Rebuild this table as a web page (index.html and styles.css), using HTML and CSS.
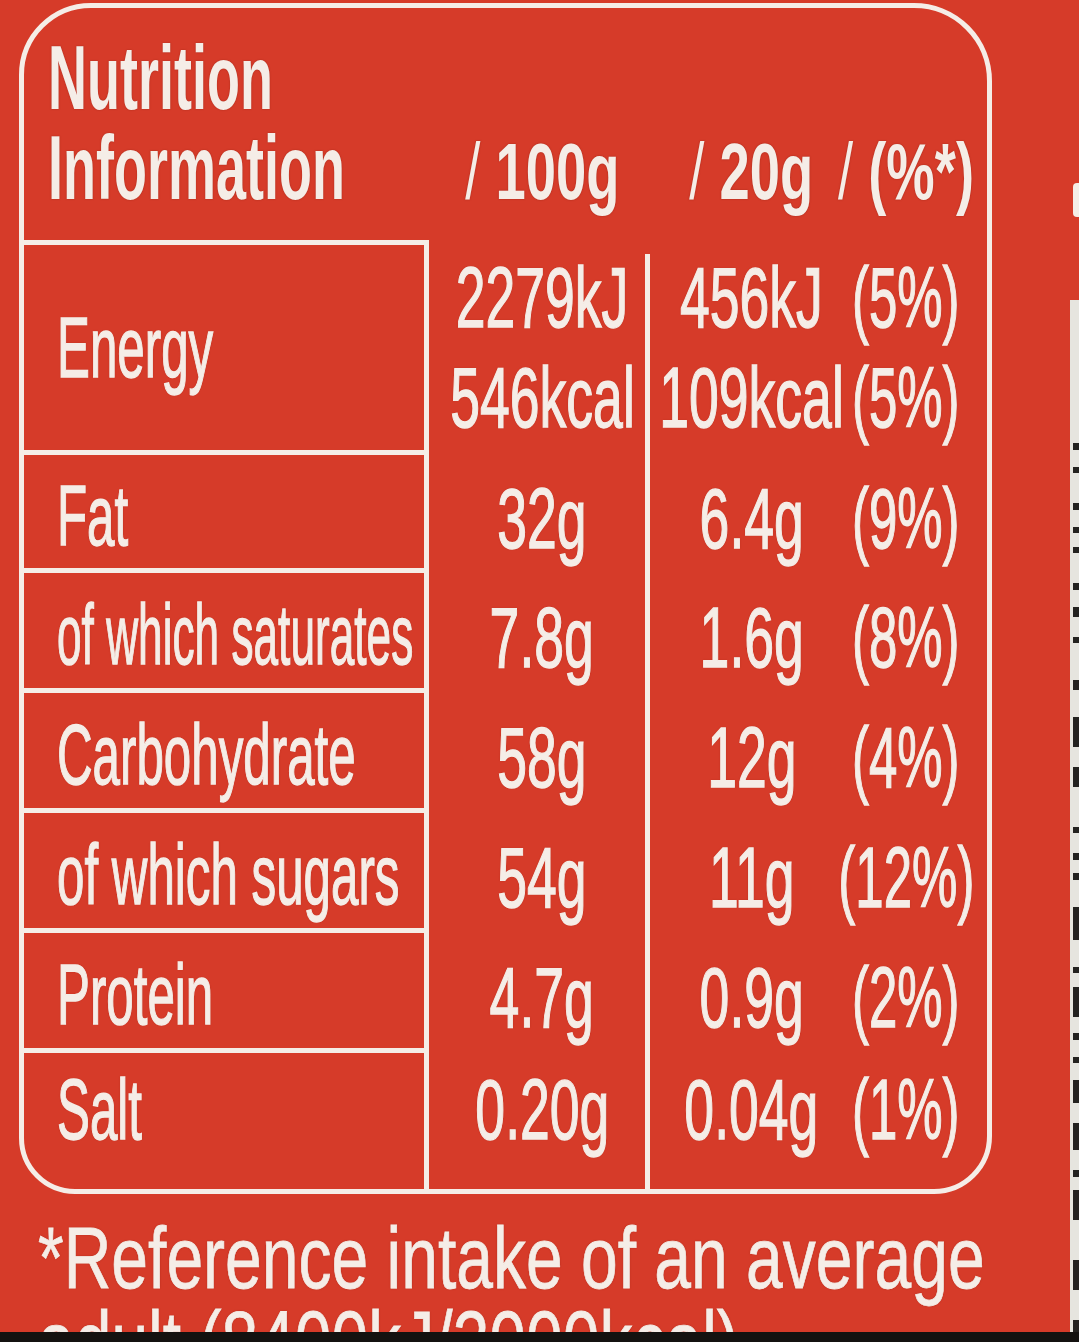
FILE: index.html
```html
<!DOCTYPE html>
<html lang="en">
<head>
<meta charset="utf-8">
<title>Nutrition Information</title>
<link rel="stylesheet" href="styles.css">
</head>
<body>
<div class="page">
  <div class="main">
    <section class="panel">
      <div class="title t1"><span>Nutrition</span></div>
      <div class="title t2"><span>Information</span></div>
      <div class="hd h100"><span><i class="sl">/</i> 100g</span></div>
      <div class="hd h20"><span><i class="sl">/</i> 20g</span></div>
      <div class="hd hpct"><span><i class="sl">/</i> (%*)</span></div>

      <div class="divider"></div>

      <div class="lab first r1"><span>Energy</span></div>
      <div class="v c100 e r1"><span>2279kJ</span><span>546kcal</span></div>
      <div class="v c20 e r1"><span>456kJ</span><span>109kcal</span></div>
      <div class="v cp e r1"><span>(5%)</span><span>(5%)</span></div>

      <div class="lab r2"><span>Fat</span></div>
      <div class="v c100 r2"><span>32g</span></div>
      <div class="v c20 r2"><span>6.4g</span></div>
      <div class="v cp r2"><span>(9%)</span></div>

      <div class="lab r3 tight"><span>of which saturates</span></div>
      <div class="v c100 r3"><span>7.8g</span></div>
      <div class="v c20 r3"><span>1.6g</span></div>
      <div class="v cp r3"><span>(8%)</span></div>

      <div class="lab r4"><span>Carbohydrate</span></div>
      <div class="v c100 r4"><span>58g</span></div>
      <div class="v c20 r4"><span>12g</span></div>
      <div class="v cp r4"><span>(4%)</span></div>

      <div class="lab r5"><span>of which sugars</span></div>
      <div class="v c100 r5"><span>54g</span></div>
      <div class="v c20 r5"><span>11g</span></div>
      <div class="v cp r5"><span>(12%)</span></div>

      <div class="lab r6"><span>Protein</span></div>
      <div class="v c100 r6"><span>4.7g</span></div>
      <div class="v c20 r6"><span>0.9g</span></div>
      <div class="v cp r6"><span>(2%)</span></div>

      <div class="lab last r7"><span>Salt</span></div>
      <div class="v c100 r7 low"><span>0.20g</span></div>
      <div class="v c20 r7 low"><span>0.04g</span></div>
      <div class="v cp r7 low"><span>(1%)</span></div>
    </section>
    <p class="foot">
      <span>*Reference intake of an average</span>
      <span>adult (8400kJ/2000kcal)</span>
    </p>
  </div>
  <div class="edge">
    <div class="gap1"></div>
    <div class="blob"></div>
    <div class="gap2"></div>
    <div class="strip"></div>
  </div>
</div>
<div class="bottom-bar"></div>
</body>
</html>
```

FILE: styles.css
```css
:root {
  --red: #d63b29;
  --w: #f5ede7;
}
html, body {
  margin: 0;
  padding: 0;
}
body {
  width: 1079px;
  height: 1342px;
  overflow: hidden;
  background: var(--red);
  color: var(--w);
  font-family: "Liberation Sans", Arial, sans-serif;
}
.page {
  display: flex;
  height: 1332px;
}
.main {
  flex: 1;
  min-width: 0;
  padding: 3px 0 0 19px;
  display: flex;
  flex-direction: column;
  overflow: hidden;
}
.panel {
  flex: none;
  width: 963px;
  height: 1181px;
  border: 5px solid var(--w);
  border-radius: 72px 78px 58px 56px;
  display: grid;
  grid-template-columns: 405px 216px 5px 195px 142px;
  grid-template-rows: 115px 117px 215px 118px 120px 120px 120px 120px 136px;
  text-shadow: 0 0 2px rgba(110, 20, 10, 0.55);
}
.panel > * {
  min-width: 0;
}

/* heading */
.title {
  grid-column: 1 / 3;
  padding-left: 24px;
  font-weight: 700;
  font-size: 90px;
  line-height: 90px;
  white-space: nowrap;
}
.title span {
  display: inline-block;
  transform: scaleX(0.6);
  transform-origin: left center;
}
.t1 { grid-row: 1; padding-top: 25px; }
.t2 { grid-row: 2; }
.hd {
  grid-row: 2;
  padding-top: 4px;
  font-weight: 700;
  font-size: 80px;
  line-height: 90px;
  white-space: nowrap;
  display: flex;
  justify-content: center;
}
.hd span {
  display: inline-block;
  flex: none;
  transform: scaleX(0.68);
}
.sl {
  font-style: normal;
  font-weight: 400;
}
.h100 { grid-column: 2; padding-left: 10px; }
.h20 { grid-column: 4; padding-left: 8px; }
.hpct { grid-column: 5; padding-right: 20px; }

/* table */
.divider {
  grid-column: 3;
  grid-row: 3 / -1;
  margin-top: 14px;
  background: var(--w);
}
.lab {
  grid-column: 1;
  box-sizing: border-box;
  border-right: 5px solid var(--w);
  border-bottom: 5px solid var(--w);
  display: flex;
  align-items: center;
  padding: 8px 0 0 33px;
  font-size: 85px;
  line-height: 85px;
  white-space: nowrap;
  -webkit-text-stroke: 1.4px var(--w);
}
.lab span {
  display: inline-block;
  flex: none;
  transform: scaleX(0.58);
  transform-origin: left center;
}
.lab.tight span { transform: scaleX(0.52); }
.lab.first { border-top: 5px solid var(--w); padding-top: 0; }
.lab.last { border-bottom: 0; padding-bottom: 32px; }

.v {
  display: flex;
  flex-direction: column;
  align-items: center;
  justify-content: center;
  padding-top: 8px;
  font-size: 85px;
  line-height: 85px;
  white-space: nowrap;
  -webkit-text-stroke: 1.4px var(--w);
}
.v span {
  display: block;
  flex: none;
  transform: scaleX(0.63);
}
.v.e {
  padding-top: 0;
  line-height: 100px;
}
.v.low { padding-bottom: 32px; }
.c100 { grid-column: 2; padding-left: 10px; }
.c20 { grid-column: 4; padding-left: 8px; }
.cp { grid-column: 5; padding-right: 20px; }
.cp span { transform: scaleX(0.6); }

.r1 { grid-row: 3; }
.r2 { grid-row: 4; }
.r3 { grid-row: 5; }
.r4 { grid-row: 6; }
.r5 { grid-row: 7; }
.r6 { grid-row: 8; }
.r7 { grid-row: 9; }

/* footnote */
.foot {
  margin: 22px 0 0;
  padding-left: 19px;
  font-size: 88px;
  line-height: 84px;
  white-space: nowrap;
  text-shadow: 0 0 2px rgba(110, 20, 10, 0.55);
  -webkit-text-stroke: 0.8px var(--w);
}
.foot span {
  display: block;
  transform: scaleX(0.75);
  transform-origin: left center;
}

/* right edge of the photo */
.edge {
  flex: none;
  width: 11px;
  display: flex;
  flex-direction: column;
}
.gap1 { height: 183px; }
.blob {
  height: 34px;
  width: 6px;
  margin-left: 5px;
  background: var(--w);
  border-radius: 4px 0 0 4px;
}
.gap2 { height: 83px; }
.strip {
  flex: 1;
  margin-left: 2px;
  background-color: #e6e5df;
  background-image: linear-gradient(to bottom,
    transparent 0 143px, #242220 143px 150px,
    transparent 150px 167px, #242220 167px 173px,
    transparent 173px 203px, #242220 203px 210px,
    transparent 210px 227px, #242220 227px 233px,
    transparent 233px 247px, #242220 247px 253px,
    transparent 253px 283px, #242220 283px 290px,
    transparent 290px 307px, #242220 307px 317px,
    transparent 317px 337px, #242220 337px 343px,
    transparent 343px 380px, #242220 380px 390px,
    transparent 390px 417px, #242220 417px 447px,
    transparent 447px 467px, #242220 467px 487px,
    transparent 487px 527px, #242220 527px 533px,
    transparent 533px 553px, #242220 553px 560px,
    transparent 560px 573px, #242220 573px 580px,
    transparent 580px 607px, #242220 607px 640px,
    transparent 640px 667px, #242220 667px 673px,
    transparent 673px 687px, #242220 687px 717px,
    transparent 717px 733px, #242220 733px 740px,
    transparent 740px 757px, #242220 757px 763px,
    transparent 763px 780px, #242220 780px 803px,
    transparent 803px 823px, #242220 823px 850px,
    transparent 850px 870px, #242220 870px 877px,
    transparent 877px 890px, #242220 890px 920px,
    transparent 920px 960px, #242220 960px 990px,
    transparent 990px 1020px, #242220 1020px 1040px,
    transparent 1040px);
  background-size: 6px 100%;
  background-position: right top;
  background-repeat: no-repeat;
}
.bottom-bar {
  height: 10px;
  background: #141210;
}
```
